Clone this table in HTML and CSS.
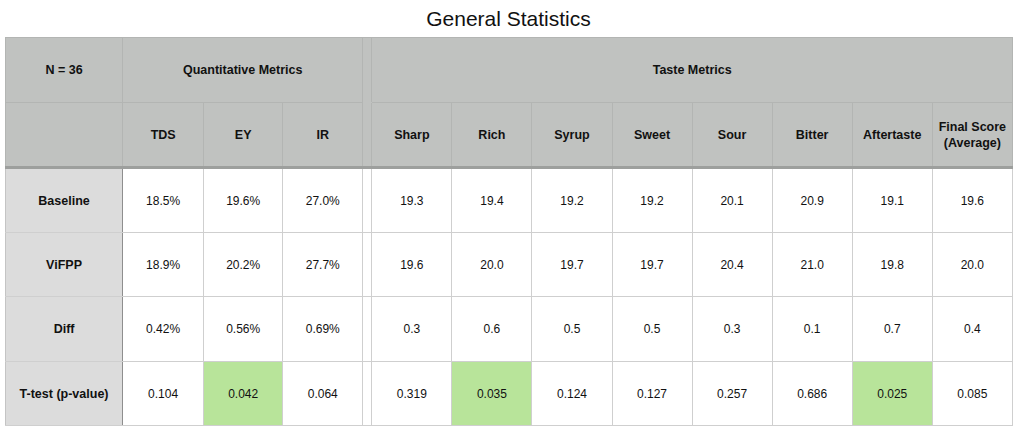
FILE: index.html
```html
<!DOCTYPE html>
<html>
<head>
<meta charset="utf-8">
<link rel="stylesheet" href="styles.css">
</head>
<body>
<div class="page">
  <h1 class="title">General Statistics</h1>
  <table class="stats">
    <colgroup>
      <col class="c-label">
      <col class="c-q1"><col class="c-q2"><col class="c-q3">
      <col class="c-gap">
      <col class="c-t"><col class="c-t"><col class="c-t"><col class="c-t">
      <col class="c-t"><col class="c-t"><col class="c-t"><col class="c-t">
    </colgroup>
    <thead>
      <tr class="h1">
        <th class="hd">N = 36</th>
        <th class="hd" colspan="3">Quantitative Metrics</th>
        <th class="hd gap"></th>
        <th class="hd" colspan="8">Taste Metrics</th>
      </tr>
      <tr class="h2">
        <th class="hd"></th>
        <th class="hd">TDS</th><th class="hd">EY</th><th class="hd">IR</th>
        <th class="hd gap"></th>
        <th class="hd">Sharp</th><th class="hd">Rich</th><th class="hd">Syrup</th><th class="hd">Sweet</th>
        <th class="hd">Sour</th><th class="hd">Bitter</th><th class="hd">Aftertaste</th><th class="hd">Final Score<br>(Average)</th>
      </tr>
    </thead>
    <tbody>
      <tr>
        <th class="rl">Baseline</th>
        <td>18.5%</td><td>19.6%</td><td>27.0%</td><td class="gap"></td>
        <td>19.3</td><td>19.4</td><td>19.2</td><td>19.2</td><td>20.1</td><td>20.9</td><td>19.1</td><td>19.6</td>
      </tr>
      <tr>
        <th class="rl">ViFPP</th>
        <td>18.9%</td><td>20.2%</td><td>27.7%</td><td class="gap"></td>
        <td>19.6</td><td>20.0</td><td>19.7</td><td>19.7</td><td>20.4</td><td>21.0</td><td>19.8</td><td>20.0</td>
      </tr>
      <tr>
        <th class="rl">Diff</th>
        <td>0.42%</td><td>0.56%</td><td>0.69%</td><td class="gap"></td>
        <td>0.3</td><td>0.6</td><td>0.5</td><td>0.5</td><td>0.3</td><td>0.1</td><td>0.7</td><td>0.4</td>
      </tr>
      <tr>
        <th class="rl">T-test (p-value)</th>
        <td>0.104</td><td class="sig">0.042</td><td>0.064</td><td class="gap"></td>
        <td>0.319</td><td class="sig">0.035</td><td>0.124</td><td>0.127</td><td>0.257</td><td>0.686</td><td class="sig">0.025</td><td>0.085</td>
      </tr>
    </tbody>
  </table>
</div>
</body>
</html>
```

FILE: styles.css
```css
html, body {
  margin: 0;
  padding: 0;
  background: #ffffff;
}

.page {
  width: 1024px;
  font-family: "Liberation Sans", Arial, Helvetica, sans-serif;
  color: #111111;
}

.title {
  margin: 0;
  height: 37px;
  line-height: 38px;
  font-size: 21px;
  font-weight: normal;
  text-align: center;
  color: #111111;
  padding-right: 7px;
}

.stats {
  margin-left: 5px;
  width: 1008px;
  table-layout: fixed;
  border-collapse: collapse;
  font-size: 12px;
}

.c-label { width: 117px; }
.c-q1 { width: 81px; }
.c-q2 { width: 79px; }
.c-q3 { width: 80px; }
.c-gap { width: 9px; }
.c-t { width: 80px; }

.stats th,
.stats td {
  text-align: center;
  vertical-align: middle;
  padding: 0 2px;
  border: 1px solid #cfcfcf;
}

.hd {
  background: #c0c2c0;
  border-color: #b3b5b3 !important;
  font-weight: bold;
  font-size: 12.5px;
  color: #111111;
}

.h1 { height: 65px; }
.h2 { height: 65px; }

.h1 .gap {
  border-bottom-color: #c0c2c0 !important;
}

.h2 .hd {
  border-bottom: 3px solid #9d9f9d !important;
  line-height: 16px;
}

.stats tbody tr { height: 65px; }
.stats tbody tr:nth-child(even) { height: 64px; }

.rl {
  background: #dcdcdc;
  font-weight: bold;
  font-size: 12.5px;
  border-right: 1px solid #8e8e8e !important;
  border-left-color: #c4c4c4 !important;
}

.gap {
  padding: 0 !important;
  border-left: 1px solid #cfcfcf;
  border-right: 1px solid #cfcfcf;
}

.sig {
  background: #b8e49a;
}
```
